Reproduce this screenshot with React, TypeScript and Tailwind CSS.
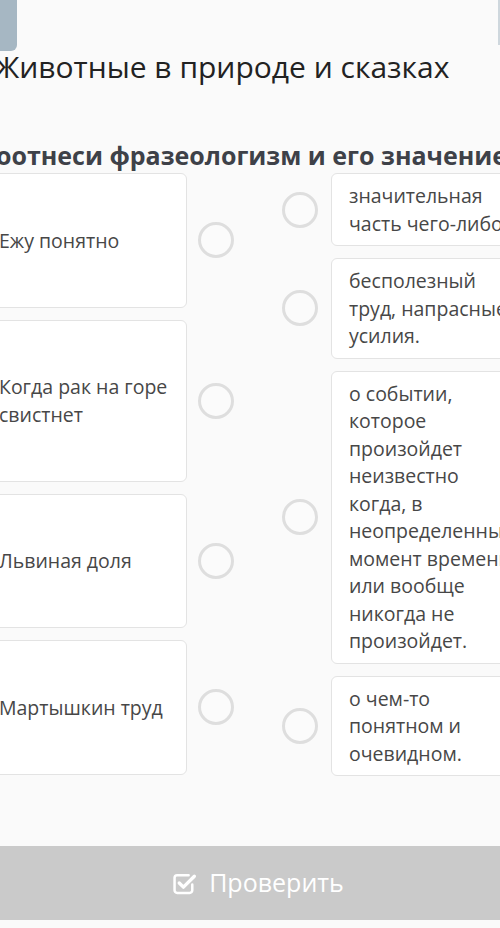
import { ReactNode } from "react";

const leftItems = ["Ежу понятно", "Когда рак на горе свистнет", "Львиная доля", "Мартышкин труд"];

const rightItems = [
  "значительная часть чего-либо",
  "бесполезный труд, напрасные усилия.",
  "о событии, которое произойдет неизвестно когда, в неопределенный момент времени или вообще никогда не произойдет.",
  "о чем-то понятном и очевидном.",
];

function Circle() {
  return <div className="w-[36px] h-[36px] shrink-0 rounded-full border-[3px] border-[#dedede] bg-[#fbfbfb]" />;
}

function Card({ children, className }: { children: ReactNode; className: string }) {
  return (
    <div className={`bg-white border border-[#e3e3e3] rounded-[6px] text-[19.5px] leading-[27.5px] text-[#474747] ${className}`}>
      {children}
    </div>
  );
}

function CheckIcon() {
  return (
    <svg width="27" height="25" viewBox="0 0 25 24" fill="none">
      <path
        d="M19 13v5.5a2.5 2.5 0 0 1-2.5 2.5h-12A2.5 2.5 0 0 1 2 18.5v-12A2.5 2.5 0 0 1 4.5 4h11"
        stroke="white"
        strokeWidth="2.4"
        strokeLinecap="round"
      />
      <path d="M6.5 11.5l4 4L21 5" stroke="white" strokeWidth="3.2" strokeLinecap="round" strokeLinejoin="round" />
    </svg>
  );
}

export default function App() {
  return (
    <div className="w-[500px] h-[928px] overflow-hidden bg-[#fafafa] flex flex-col font-['Open_Sans',sans-serif]">
      {/* top bar remnants */}
      <div className="h-[51px] flex justify-between shrink-0">
        <div className="w-[17px] h-[51px] bg-[#a6b7c3] rounded-br-[6px]" />
        <div className="w-[2px] h-[45px] bg-[#ced7dd]" />
      </div>

      <h1 className="-mt-[4px] -ml-[6px] text-[30px] leading-[40px] text-[#222] whitespace-nowrap">
        Животные в природе и сказках
      </h1>

      <h2 className="mt-[52px] -ml-[20px] text-[25px] leading-[32px] font-bold text-[#3e4148] whitespace-nowrap">
        Соотнеси фразеологизм и его значение
      </h2>

      {/* matching area */}
      <div className="mt-[2px] -ml-[19px] flex items-start">
        <div className="flex flex-col gap-3">
          {leftItems.map((t) => (
            <div key={t} className="flex items-center gap-[11px]">
              <Card className="w-[206px] py-[52.5px] pl-[17px] pr-2">{t}</Card>
              <Circle />
            </div>
          ))}
        </div>
        <div className="ml-[48px] flex flex-col gap-3">
          {rightItems.map((t) => (
            <div key={t} className="flex items-center gap-[13px]">
              <Circle />
              <Card className="w-[198px] shrink-0 py-2 px-[17px]">{t}</Card>
            </div>
          ))}
        </div>
      </div>

      <button className="mt-auto mb-[8px] h-[74px] w-full bg-[#cacaca] flex items-center justify-center gap-[10px] pl-[16px] text-white text-[25px]">
        <CheckIcon />
        <span>Проверить</span>
      </button>
    </div>
  );
}
